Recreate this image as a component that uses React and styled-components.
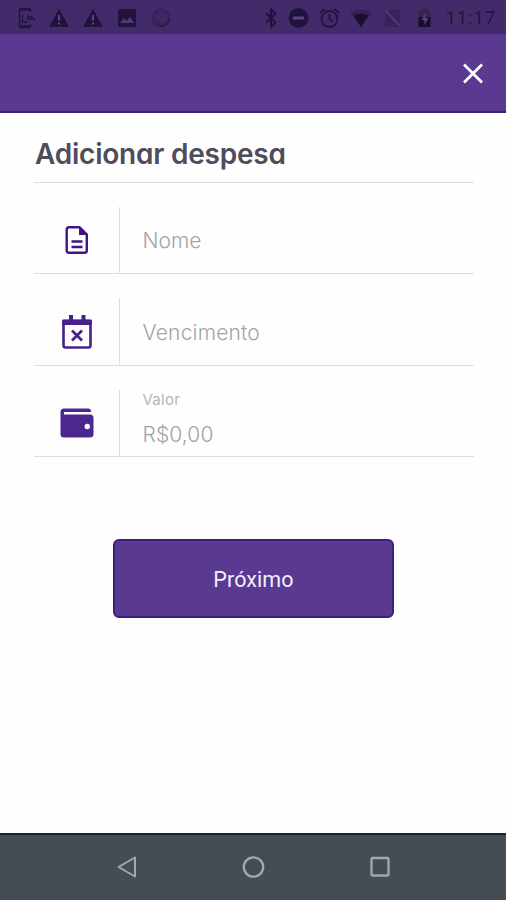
import React from "react";
import styled, { createGlobalStyle } from "styled-components";

const GlobalStyle = createGlobalStyle`
  * { box-sizing: border-box; }
  body { margin: 0; background: #fff; }
`;

const Screen = styled.div`
  width: 506px;
  height: 900px;
  display: flex;
  flex-direction: column;
  background: #fefefe;
  overflow: hidden;
  font-family: Inter, Roboto, sans-serif;
`;

const StatusBar = styled.div`
  height: 34px;
  flex: none;
  display: flex;
  align-items: center;
  justify-content: space-between;
  padding: 2px 10px 0 14px;
  background: #432b6b;
`;

const StatusGroup = styled.div`
  display: flex;
  align-items: center;
  gap: ${(p) => p.$gap}px;
`;

const Clock = styled.span`
  font: 400 18.5px/22px Roboto, sans-serif;
  letter-spacing: 0.9px;
  color: #21143c;
  margin-left: 1px;
`;

const Header = styled.header`
  height: 79px;
  flex: none;
  display: flex;
  align-items: center;
  justify-content: flex-end;
  padding: 1px 22px 0 0;
  background: #593a90;
  border-bottom: 2px solid #3d1a80;
`;

const CloseButton = styled.button`
  display: flex;
  padding: 0;
  border: 0;
  background: none;
`;

const Content = styled.main`
  flex: 1;
  display: flex;
  flex-direction: column;
  padding: 0 32px 0 34px;
`;

const Title = styled.h1`
  margin: 0;
  height: 70px;
  padding: 23px 0 0 1px;
  border-bottom: 1px solid #dedee0;
  font: 600 28px/36px Inter, sans-serif;
  font-feature-settings: "cv11" 1, "ss03" 1;
  letter-spacing: -0.22px;
  color: #4f4c5b;
`;

const Field = styled.label`
  display: flex;
  height: 67.4px;
  margin-top: 24px;
  border-bottom: 1.4px solid #dddde0;
`;

const FieldIcon = styled.span`
  width: 86px;
  flex: none;
  display: flex;
  align-items: center;
  justify-content: center;
  border-right: 1.5px solid #dfdfe2;
`;

const FieldText = styled.span`
  display: flex;
  flex-direction: column;
  justify-content: ${(p) => (p.$top ? "flex-start" : "center")};
  padding: ${(p) => (p.$top ? 0 : 2)}px 0 0 22.5px;
`;

const Caption = styled.span`
  font: 400 15px/20px Inter, sans-serif;
  letter-spacing: 0.25px;
  color: #b5b5b8;
`;

const Value = styled.span`
  font: 300 21px/28px Inter, sans-serif;
  letter-spacing: ${(p) => p.$spacing || 0}px;
  margin-top: ${(p) => p.$top || 0}px;
  color: #a3a3a7;
`;

const NextButton = styled.button`
  align-self: center;
  width: 281px;
  height: 79px;
  margin: 82px 0 0 -1px;
  padding: 2px 0 0;
  border: 2px solid #3f1c82;
  border-radius: 6px;
  background: #593a90;
  color: #f4ecff;
  font: 400 21.5px/28px Roboto, sans-serif;
  letter-spacing: 0.1px;
`;

const NavBar = styled.nav`
  height: 67px;
  flex: none;
  display: flex;
  justify-content: center;
  gap: 102.5px;
  padding: 20px 0 0 1px;
  background: #454c53;
  border-top: 2px solid #102633;
`;

const dark = "#21143c";

const Icon = ({ w = 24, h = 24, children }) => (
  <svg width={w} height={h} viewBox={`0 0 ${w} ${h}`} fill="none" aria-hidden="true">
    {children}
  </svg>
);

const Warning = () => (
  <Icon w={22} h={22}>
    <path d="M11 1.500 21 20H1Z" fill={dark} />
    <path d="M11 8v5.500M11 15.500v2" stroke="#5d4485" strokeWidth="2" />
  </Icon>
);

export default function App() {
  return (
    <>
      <GlobalStyle />
      <Screen>
        <StatusBar>
          <StatusGroup $gap={12}>
            <Icon w={22} h={22}>
              <path d="M16.500 5V3Q16.500 1.500 15 1.500H7Q5.500 1.500 5.500 3v16q0 1.500 1.500 1.500h8q1.500 0 1.500-1.500v-2" stroke={dark} strokeWidth="1.600" />
              <path d="M5.500 2.500h11M5.500 19.500h11" stroke={dark} strokeWidth="2.600" />
              <path d="M8.500 8v7h5M13 11a4 4 0 0 1 7 3M14 8v4h4" stroke={dark} strokeWidth="1.400" />
            </Icon>
            <Warning />
            <Warning />
            <Icon w={22} h={22}>
              <rect x="2" y="2" width="18" height="18" rx="2" fill={dark} />
              <path d="m4 16 4-5 3 3 3-4 4 6Z" fill="#503b75" />
            </Icon>
            <Icon w={22} h={22}>
              <circle cx="11" cy="11" r="9.500" fill="#36235b" />
              <path d="m4 9 7-6 8 8-7 7Z" fill="#3d2860" />
              <path d="M19.500 11a9 9 0 0 1-11 8" stroke="#2b1a47" strokeWidth="1.500" />
            </Icon>
          </StatusGroup>
          <StatusGroup $gap={9}>
            <Icon w={16} h={22}>
              <path d="m4 6 9.500 9.500L9 20V2l4.500 4.500L4 16" stroke={dark} strokeWidth="2" />
            </Icon>
            <Icon w={22} h={22}>
              <circle cx="11.500" cy="11" r="10" fill={dark} />
              <path d="M6 11h11" stroke="#5b447f" strokeWidth="3" />
            </Icon>
            <Icon w={22} h={22}>
              <circle cx="11.500" cy="12" r="8" stroke={dark} strokeWidth="1.800" />
              <path d="M11.500 7v5l3 3M2 6l4.500-4M21 6l-4.500-4" stroke={dark} strokeWidth="1.800" />
            </Icon>
            <Icon w={24} h={22}>
              <path d="M1 6Q12-1 23 6L12 20Z" fill="#362252" />
              <path d="M4.500 8.500q7.500-4 15 0L12 20Z" fill="#190e2d" />
            </Icon>
            <Icon w={22} h={22}>
              <path d="M8 2h10v18H3V7Z" fill="#37245a" />
              <path d="m4 4 14 15" stroke="#513778" strokeWidth="2" />
            </Icon>
            <Icon w={22} h={22}>
              <path d="M9 1h5v2h3.500v17h-12V3H9Z" fill="#392450" />
              <path d="M5.500 10h12v10h-12Z" fill="#190e2d" />
              <path d="m12.500 6-4 7h3v5l4-7h-3Z" fill="#5b427f" />
            </Icon>
            <Clock>11:17</Clock>
          </StatusGroup>
        </StatusBar>

        <Header>
          <CloseButton aria-label="Fechar">
            <Icon w={22} h={22}>
              <path d="m2 2.500 18 18m0-18-18 18" stroke="#fff" strokeWidth="2.800" />
            </Icon>
          </CloseButton>
        </Header>

        <Content>
          <Title>Adicionar despesa</Title>
          <Field>
            <FieldIcon>
              <Icon w={24} h={30}>
                <path d="M4 2.200h10.500L21.800 9.500V25.500q0 2.300-2.300 2.300H4q-2.300 0-2.300-2.300V4.500Q1.700 2.200 4 2.200Z" stroke="#42148a" strokeWidth="2.400" />
                <path d="M14 1.500V10h8.500Z" fill="#42148a" />
                <path d="M6.500 16.500h11M6.500 22h11" stroke="#42148a" strokeWidth="2.300" />
              </Icon>
            </FieldIcon>
            <FieldText><Value>Nome</Value></FieldText>
          </Field>
          <Field>
            <FieldIcon>
              <Icon w={30} h={35}>
                <path d="M1.500 7h27v24.500q0 2-2 2h-23q-2 0-2-2Z" stroke="#47208b" strokeWidth="2.600" />
                <path d="M2 5.500h26q2 0 2 2V11H0V7.500q0-2 2-2ZM7 1h4v6H7ZM19.500 1h4v6h-4Z" fill="#47208b" />
                <path d="m10 16.500 10 10m0-10-10 10" stroke="#47208b" strokeWidth="2.700" />
              </Icon>
            </FieldIcon>
            <FieldText><Value $spacing={0.18}>Vencimento</Value></FieldText>
          </Field>
          <Field>
            <FieldIcon>
              <Icon w={34} h={30}>
                <path d="M4 .5h24q3 0 3 3V4H4v2.500h26q3.500 0 3.500 3.500v16q0 3.500-3.500 3.500H4Q.5 29.500.5 26V4Q.5.5 4 .5Z" fill="#4c2790" />
                <circle cx="27.300" cy="18.500" r="2.700" fill="#fff" />
              </Icon>
            </FieldIcon>
            <FieldText $top>
              <Caption>Valor</Caption>
              <Value $top={11} $spacing={0.1}>R$0,00</Value>
            </FieldText>
          </Field>
          <NextButton>Próximo</NextButton>
        </Content>

        <NavBar>
          <Icon w={24} h={24}>
            <path d="M20 2.500v19L3.500 12Z" stroke="#a2a9ae" strokeWidth="2" strokeLinejoin="round" />
          </Icon>
          <Icon w={24} h={24}>
            <circle cx="11.500" cy="12" r="9.700" stroke="#a2a9ae" strokeWidth="2.300" />
          </Icon>
          <Icon w={24} h={24}>
            <rect x="3.500" y="3" width="17" height="17.500" rx="1" stroke="#a2a9ae" strokeWidth="2.300" />
          </Icon>
        </NavBar>
      </Screen>
    </>
  );
}
